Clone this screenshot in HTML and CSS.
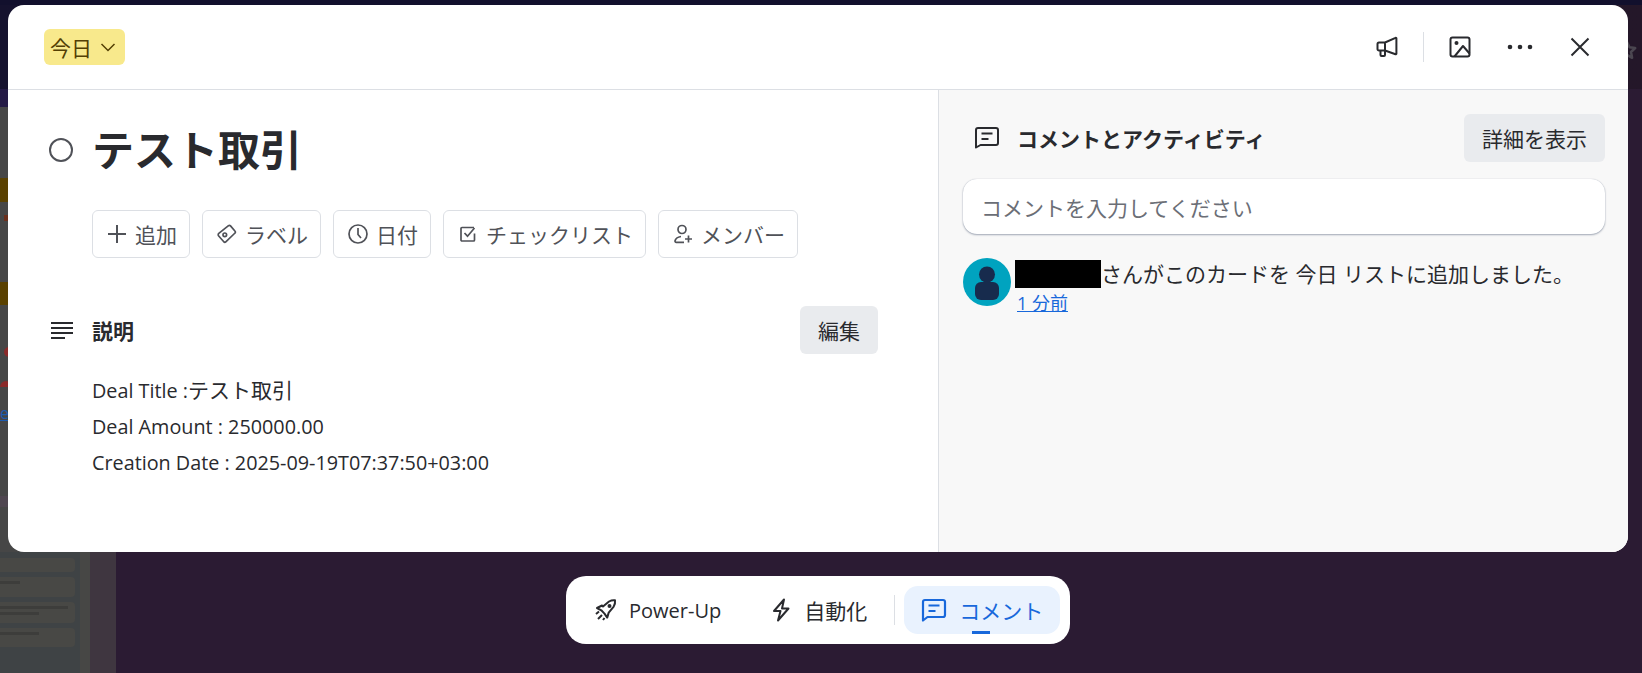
FILE: index.html
```html
<!DOCTYPE html>
<html lang="ja">
<head>
  <meta charset="UTF-8" />
  <title>テスト取引</title>
  <link rel="stylesheet" href="styles.css">
</head>
<body>
  <div class="board">
    <div class="board-top"></div>
    <div class="board-band"></div>
    <div class="board-nav"></div>
    <div class="board-left">
      <div class="list">
        <div class="list-stripe"></div>
        <div class="list-spot"></div>
        <div class="list-stripe second"></div>
        <div class="list-dot"></div>
        <div class="list-dot small"></div>
        <a class="list-link">e</a>
        <div class="list-band"></div>
        <div class="list-cards">
          <div class="ghost-card first"></div>
          <div class="ghost-card second"><i class="tiny"></i></div>
          <div class="ghost-card third"><i></i><i class="short"></i></div>
          <div class="ghost-card fourth"><i class="short"></i></div>
        </div>
      </div>
    </div>
    <svg class="board-star" width="20" height="20" viewBox="0 0 20 20" fill="none" stroke="currentColor" stroke-width="2.500" stroke-linejoin="round"><path d="m10 2 2.500 5.300 5.700.7-4.200 4 1.100 5.800-5.100-2.900-5.100 2.900 1.100-5.800-4.200-4 5.700-.7L10 2Z"/></svg>
  </div>

  <div class="modal">
    <header class="modal-head">
      <button class="list-pill"><span>今日</span>
        <svg width="16" height="16" viewBox="0 0 16 16" fill="none" stroke="currentColor" stroke-width="1.500"><path d="M1.500 5 8 11.500 14.500 5"/></svg>
      </button>
      <div class="head-tools">
        <button class="tool">
          <svg width="24" height="24" viewBox="0 0 24 24" fill="none" stroke="currentColor" stroke-width="2" stroke-linejoin="round"><path d="M10 7.500 20.500 2.800a.6.6 0 0 1 .9.500v15.400a.6.6 0 0 1-.9.500L10 15.500H4a1.500 1.500 0 0 1-1.500-1.500V9A1.500 1.500 0 0 1 4 7.500h6Zm0 0v8M5.500 15.500V20a1 1 0 0 0 1 1h2.500a1 1 0 0 0 1-1v-4"/></svg>
        </button>
        <span class="tool-sep"></span>
        <button class="tool">
          <svg width="24" height="24" viewBox="0 0 24 24" fill="none" stroke="currentColor" stroke-width="2" stroke-linejoin="round"><rect x="2.500" y="2.500" width="19" height="19" rx="2"/><circle cx="8.500" cy="8" r="2" fill="currentColor" stroke="none"/><path d="m6.500 21.500 8.500-10.500 6.500 7.500"/></svg>
        </button>
        <button class="tool">
          <svg width="28" height="28" viewBox="0 0 28 28" fill="currentColor"><circle cx="4" cy="14" r="2.300"/><circle cx="14" cy="14" r="2.300"/><circle cx="24" cy="14" r="2.300"/></svg>
        </button>
        <button class="tool">
          <svg width="24" height="24" viewBox="0 0 24 24" fill="none" stroke="currentColor" stroke-width="2"><path d="m3.500 3.500 17 17m0-17-17 17"/></svg>
        </button>
      </div>
    </header>

    <div class="modal-body">
      <main class="main-col">
        <div class="title-row">
          <span class="circle"></span>
          <h1>テスト取引</h1>
        </div>

        <div class="actions">
          <button class="action">
            <svg width="20" height="20" viewBox="0 0 20 20" fill="none" stroke="currentColor" stroke-width="2"><path d="M10 1v18M1 10h18"/></svg>
            追加
          </button>
          <button class="action">
            <svg width="20" height="20" viewBox="0 0 20 20" fill="none" stroke="currentColor" stroke-width="1.700" stroke-linejoin="round"><path d="M1.800 9.400 11.500 1.700a1.500 1.500 0 0 1 2 .2l4.600 5.400a1.200 1.200 0 0 1-.1 1.700L8.800 17.800a1.500 1.500 0 0 1-2 0L1.700 12a1.800 1.800 0 0 1 .1-2.600Z"/><circle cx="7.800" cy="10.800" r="1.800"/></svg>
            ラベル
          </button>
          <button class="action">
            <svg width="20" height="20" viewBox="0 0 20 20" fill="none" stroke="currentColor" stroke-width="1.700"><circle cx="10" cy="10" r="9"/><path d="M10 4v6.500l3 3.500"/></svg>
            日付
          </button>
          <button class="action">
            <svg width="20" height="20" viewBox="-1 -1 20 20" fill="none" stroke="currentColor" stroke-width="1.700"><path d="M15.500 8.500V15a1 1 0 0 1-1 1H3a1 1 0 0 1-1-1V3.500a1 1 0 0 1 1-1h12"/><path d="m5.500 8 3 3.200L15.500 3"/></svg>
            チェックリスト
          </button>
          <button class="action">
            <svg width="20" height="20" viewBox="0 0 20 20" fill="none" stroke="currentColor" stroke-width="1.700"><circle cx="9" cy="5.500" r="4"/><path d="M8 12.500c-3 .5-5.500 2-6 4.500a1.200 1.200 0 0 0 1.200 1.300H11M15.500 11.500v7M12 15h7"/></svg>
            メンバー
          </button>
        </div>

        <section class="desc">
          <div class="desc-head">
            <svg class="desc-icon" width="24" height="24" viewBox="0 0 24 24" fill="currentColor"><rect x="2" y="4" width="22" height="2"/><rect x="2" y="9" width="22" height="2"/><rect x="2" y="14" width="22" height="2"/><rect x="2" y="19" width="14" height="2"/></svg>
            <h2>説明</h2>
            <button class="grey-btn edit">編集</button>
          </div>
          <div class="desc-text">
            <p>Deal Title :<span class="ja">テスト取引</span></p>
            <p>Deal Amount : 250000.00</p>
            <p>Creation Date : 2025-09-19T07:37:50+03:00</p>
          </div>
        </section>
      </main>

      <aside class="side-col">
        <div class="side-head">
          <svg width="26" height="26" viewBox="0 0 26 26" fill="none" stroke="currentColor" stroke-width="2" stroke-linejoin="round"><path d="M2 22.500V5a2 2 0 0 1 2-2h18a2 2 0 0 1 2 2v13a2 2 0 0 1-2 2H6.500L2 22.500Z"/><path d="M7.500 8.500h11M7.500 14h7"/></svg>
          <h2>コメントとアクティビティ</h2>
          <button class="grey-btn detail">詳細を表示</button>
        </div>
        <div class="comment-input">コメントを入力してください</div>
        <div class="activity">
          <div class="avatar">
            <svg width="48" height="48" viewBox="0 0 48 48" fill="#172b4d"><circle cx="24" cy="16.500" r="8"/><rect x="12" y="24" width="24" height="18" rx="6"/></svg>
          </div>
          <div class="activity-text">
            <p><span class="redact"></span>さんがこのカードを 今日 リストに追加しました。</p>
            <a class="time">1 分前</a>
          </div>
        </div>
      </aside>
    </div>
  </div>

  <nav class="dock">
    <button class="dock-item">
      <svg width="24" height="24" viewBox="0 0 24 24" fill="none" stroke="currentColor" stroke-width="2" stroke-linejoin="round"><path d="M9 8.500 15 3.500c1.800-1 4-1.500 6-1.200.3 2.200-.2 4.500-1.300 6.300l-5 6-1.500 5-2.700-4-3.200-3.300-4.300-2.300 5-2.500Z"/><circle cx="15.500" cy="8" r="1" fill="currentColor"/><path d="m2 16 3-2.500M4 21l4-4M9 22l1.500-2"/></svg>
      Power-Up
    </button>
    <button class="dock-item">
      <svg width="24" height="24" viewBox="0 0 24 24" fill="none" stroke="currentColor" stroke-width="2" stroke-linejoin="round"><path d="M15 1.500 5 13h6.500L9 22.500 19.500 10.500H13L15 1.500Z"/></svg>
      <span class="ja">自動化</span>
    </button>
    <span class="dock-sep"></span>
    <button class="dock-item active">
      <svg width="26" height="26" viewBox="0 0 26 26" fill="none" stroke="currentColor" stroke-width="2.200" stroke-linejoin="round"><path d="M2 23.500V5a2 2 0 0 1 2-2h18a2 2 0 0 1 2 2v13a2 2 0 0 1-2 2H6.500L2 23.500Z"/><path d="M7.500 8.500h11M7.500 14h7"/></svg>
      <span class="ja">コメント</span>
    </button>
  </nav>
</body>
</html>
```

FILE: styles.css
```css
* {
  box-sizing: border-box;
}

body {
  margin: 0;
  height: 673px;
  overflow: hidden;
  background: #2b1b33;
  font-family: "Open Sans", "Noto Sans CJK JP", sans-serif;
  color: #292a2e;
  position: relative;
}

button {
  font: inherit;
  color: inherit;
  border: none;
  background: none;
  padding: 0;
}

h1, h2, p {
  margin: 0;
}

.ja {
  font-size: 21px;
}

/* board behind the modal */
.board {
  position: absolute;
  inset: 0;
}
.board-top {
  height: 5px;
  background: #12102d;
}
.board-band {
  height: 84px;
  background: linear-gradient(90deg, #15122e, #241729);
}
.board-nav {
  height: 18px;
  background: linear-gradient(90deg, #241a45, #2b1b33);
}
.board-left {
  width: 116px;
  height: 566px;
  background: #3f3640;
}
.list {
  width: 90px;
  height: 100%;
  border-right: 10px solid #474745;
  background: linear-gradient(#464646 0 445px, #3f4345 445px);
  padding-top: 71px;
}
.list-stripe {
  height: 24px;
  background: #5a4100;
}
.list-stripe.second {
  margin-top: 61px;
  height: 23px;
}
.list-spot {
  width: 6px;
  height: 6px;
  margin: 13px 0 0 4px;
  background: #6b2f1c;
}
.list-dot {
  width: 12px;
  height: 10px;
  margin: 42px 0 0 4px;
  background: #8a2a2a;
  border-radius: 5px;
}
.list-dot.small {
  height: 6px;
  margin-top: 24px;
  margin-left: 0;
  border-radius: 6px 6px 0 0;
}
.list-link {
  display: block;
  margin-top: 16px;
  font-size: 16px;
  line-height: 20px;
  color: #1c5bb0;
  text-decoration: underline;
}
.list-band {
  height: 11px;
  margin-top: 73px;
  background: #4f4650;
}
.list-cards {
  margin-top: 51px;
  width: 75px;
  display: flex;
  flex-direction: column;
  gap: 5px;
}
.ghost-card {
  background: #484845;
  border-radius: 0 4px 4px 0;
  padding-top: 4px;
}
.ghost-card.first {
  height: 14px;
}
.ghost-card.second {
  height: 20px;
}
.ghost-card.third {
  height: 21px;
}
.ghost-card.fourth {
  height: 19px;
}
.ghost-card i {
  display: block;
  height: 3px;
  width: 68px;
  margin-bottom: 3px;
  background: #3d3d3b;
}
.ghost-card i.short {
  width: 39px;
}
.ghost-card i.tiny {
  width: 20px;
}
.board-star {
  position: absolute;
  left: 1617px;
  top: 40px;
  color: #4b4650;
}

/* modal */
.modal {
  position: absolute;
  left: 8px;
  top: 5px;
  width: 1620px;
  height: 547px;
  background: #fff;
  border-radius: 16px;
  overflow: hidden;
  display: flex;
  flex-direction: column;
}

.modal-head {
  height: 85px;
  flex-shrink: 0;
  border-bottom: 1px solid #dcdfe4;
  display: flex;
  align-items: center;
  justify-content: space-between;
  padding: 0 26px 0 36px;
}

.list-pill {
  display: flex;
  align-items: center;
  gap: 8px;
  height: 36px;
  padding: 0 9px 0 6px;
  background: #f8e98c;
  border-radius: 6px;
  color: #533f04;
  font-size: 21px;
}

.head-tools {
  display: flex;
  align-items: center;
}
.tool {
  width: 44px;
  height: 44px;
  display: flex;
  align-items: center;
  justify-content: center;
  color: #292a2e;
  margin-left: 16px;
}
.tool:first-child {
  margin-left: 0;
}
.tool-sep {
  width: 1px;
  height: 30px;
  background: #dcdfe4;
  margin-left: 14px;
  margin-right: -2px;
}

.modal-body {
  flex: 1;
  display: flex;
  min-height: 0;
}

.main-col {
  width: 931px;
  flex-shrink: 0;
  border-right: 1px solid #dcdfe4;
  padding: 0 60px 0 41px;
}

.title-row {
  display: flex;
  align-items: center;
  gap: 19px;
  padding-top: 32px;
}
.circle {
  width: 24px;
  height: 24px;
  border: 2px solid #505258;
  border-radius: 50%;
  flex-shrink: 0;
}
.title-row h1 {
  font-size: 42px;
  line-height: 56px;
  font-weight: 700;
}

.actions {
  display: flex;
  gap: 12px;
  margin: 32px 0 0 43px;
}
.action {
  display: flex;
  align-items: center;
  gap: 8px;
  height: 48px;
  padding: 0 12px 0 14px;
  border: 1px solid #dcdfe4;
  border-radius: 6px;
  font-size: 21px;
  color: #505258;
}

.desc {
  margin-top: 48px;
}
.desc-head {
  display: flex;
  align-items: center;
  height: 48px;
}
.desc-icon {
  flex-shrink: 0;
  margin-right: 19px;
}
.desc-head h2 {
  font-size: 21px;
  font-weight: 700;
}
.grey-btn {
  background: #e9ebee;
  border-radius: 6px;
  font-size: 21px;
  height: 48px;
  padding: 0 18px;
  color: #292a2e;
}
.edit {
  margin-left: auto;
}
.desc-text {
  margin: 18px 0 0 43px;
  font-size: 19.8px;
  line-height: 36px;
  color: #292a2e;
}

.side-col {
  flex: 1;
  background: #f8f8f8;
  padding: 24px 23px 0 24px;
}
.side-head {
  display: flex;
  align-items: center;
  height: 48px;
  padding-left: 11px;
}
.side-head h2 {
  font-size: 21px;
  font-weight: 700;
  margin-left: 17px;
}
.detail {
  margin-left: auto;
}

.comment-input {
  margin-top: 17px;
  height: 55px;
  background: #fff;
  border-radius: 14px;
  box-shadow: 0 1px 2px rgba(9, 30, 66, .35), 0 0 1px rgba(9, 30, 66, .25);
  padding: 0 18px;
  display: flex;
  align-items: center;
  font-size: 21px;
  color: #6b6e76;
}

.activity {
  display: flex;
  margin-top: 24px;
}
.avatar {
  width: 48px;
  height: 48px;
  border-radius: 50%;
  background: #00a3bf;
  flex-shrink: 0;
  overflow: hidden;
}
.activity-text {
  font-size: 21px;
  line-height: 32px;
}
.activity-text p {
  display: flex;
  align-items: center;
  white-space: pre;
}
.redact {
  display: inline-block;
  width: 86px;
  height: 28px;
  background: #000;
  margin: 1px 0 1px 4px;
}
.time {
  display: block;
  margin: 3px 0 0 6px;
  font-size: 18px;
  line-height: 20px;
  color: #1868db;
  text-decoration: underline;
}

/* bottom dock */
.dock {
  position: absolute;
  left: 566px;
  top: 576px;
  width: 504px;
  height: 68px;
  background: #fff;
  border-radius: 20px;
  display: flex;
  align-items: center;
  padding: 0 10px 0 18px;
}
.dock-item {
  display: flex;
  align-items: center;
  gap: 11px;
  height: 48px;
  padding: 0 10px;
  font-size: 20px;
  color: #292a2e;
  border-radius: 14px;
  white-space: nowrap;
}
.dock-item + .dock-item {
  margin-left: 28px;
}
.dock-sep {
  width: 1px;
  height: 30px;
  background: #dcdfe4;
  margin: 0 9px 0 17px;
}
.dock-item.active {
  position: relative;
  gap: 12px;
  background: #e9f2fe;
  color: #1868db;
  padding: 0 0 0 17px;
  margin-left: 0;
  flex: 1;
}
.dock-item.active::after {
  content: '';
  position: absolute;
  left: 68px;
  bottom: 0;
  width: 18px;
  height: 3px;
  background: #1868db;
}
```
